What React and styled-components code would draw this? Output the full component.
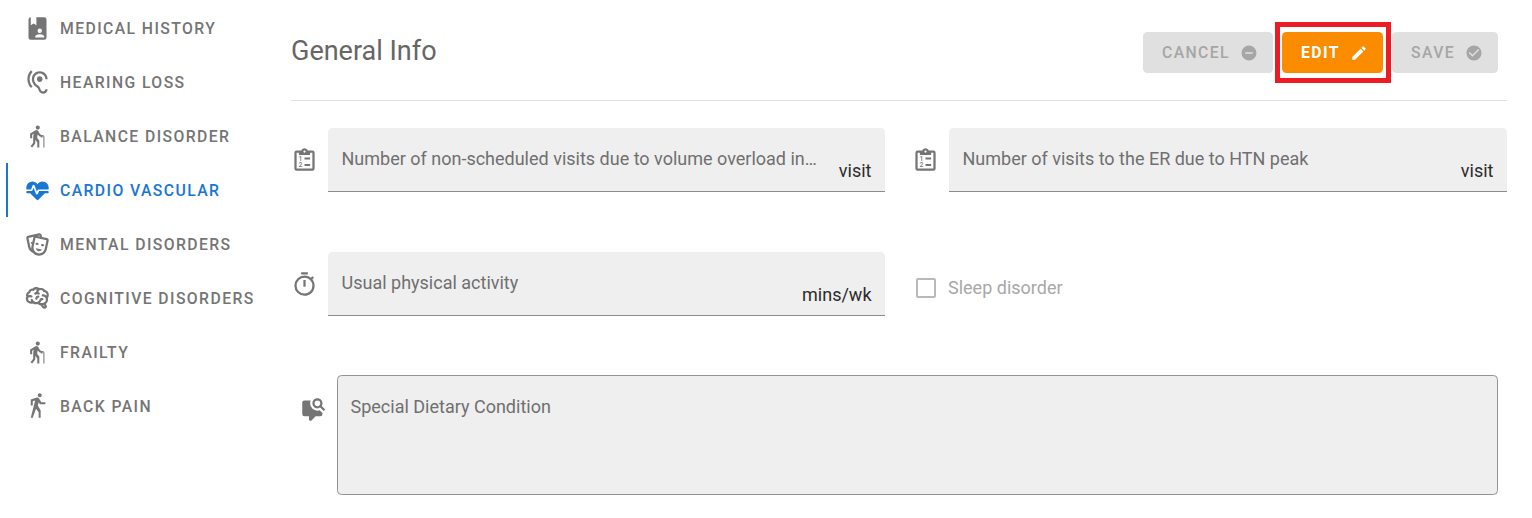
import React from "react";
import styled, { createGlobalStyle } from "styled-components";
import { MdElderly } from "react-icons/md";

const GlobalStyle = createGlobalStyle`
  *, *::before, *::after { box-sizing: border-box; }
  body {
    margin: 0;
    background: #fff;
    font-family: Roboto, "Liberation Sans", sans-serif;
    overflow: hidden;
  }
`;

const GREY = "#757575";
const BLUE = "#1976d2";

const paths = {
  bookAccount:
    "M18,2A2,2 0 0,1 20,4V20A2,2 0 0,1 18,22H6A2,2 0 0,1 4,20V4A2,2 0 0,1 6,2V9L8.5,7.5L11,9V2H18M14,12A2,2 0 0,0 12,14A2,2 0 0,0 14,16A2,2 0 0,0 16,14A2,2 0 0,0 14,12M18,20V19C18,17.67 15.33,17 14,17C12.67,17 10,17.67 10,19V20H18Z",
  ear: "M17 20c-.29 0-.56-.06-.76-.15-.71-.37-1.21-.88-1.71-2.38-.51-1.56-1.47-2.29-2.39-3-.79-.61-1.61-1.24-2.32-2.53C9.29 10.98 9 9.93 9 9c0-2.8 2.2-5 5-5s5 2.2 5 5h2c0-3.93-3.07-7-7-7S7 5.07 7 9c0 1.26.38 2.65 1.07 3.9.91 1.65 1.98 2.48 2.85 3.15.81.62 1.39 1.07 1.71 2.05.6 1.82 1.37 2.84 2.73 3.55.51.23 1.07.35 1.64.35 2.21 0 4-1.79 4-4h-2c0 1.1-.9 2-2 2zM7.64 2.64L6.22 1.22C4.23 3.21 3 5.96 3 9s1.23 5.79 3.22 7.78l1.41-1.41C6.01 13.74 5 11.49 5 9s1.01-4.74 2.64-6.36zM11.5 9c0 1.38 1.12 2.5 2.5 2.5s2.5-1.12 2.5-2.5-1.12-2.5-2.5-2.5-2.5 1.12-2.5 2.5z",
  heartPulse:
    "M7.5,4A5.5,5.5 0 0,0 2,9.5C2,10 2.09,10.5 2.22,11H6.3L7.57,7.63C7.87,6.83 9.05,6.75 9.43,7.63L11.5,13L12.09,11.58C12.22,11.25 12.57,11 13,11H21.78C21.91,10.5 22,10 22,9.5A5.5,5.5 0 0,0 16.5,4C14.64,4 13,4.93 12,6.34C11,4.93 9.36,4 7.5,4V4M3,12.5A1,1 0 0,0 2,13.5A1,1 0 0,0 3,14.5H5.44L11,20C12,20.9 12,20.9 13,20L18.56,14.5H21A1,1 0 0,0 22,13.5A1,1 0 0,0 21,12.5H13.4L12.47,14.8C12.07,15.81 10.92,15.67 10.55,14.83L8.5,9.5L7.54,11.83C7.39,12.21 7.05,12.5 6.6,12.5H3Z",
  masks:
    "M8.11,19.45C5.94,18.65 4.22,16.78 3.71,14.35L2.05,6.54C1.81,5.46 2.5,4.4 3.58,4.17L13.35,2.1L13.38,2.09C14.45,1.88 15.5,2.57 15.72,3.63L16.07,5.3L20.42,6.23H20.45C21.5,6.47 22.18,7.53 21.96,8.59L20.3,16.41C19.5,20.18 15.78,22.6 12,21.79C10.42,21.46 9.08,20.61 8.11,19.45V19.45M20,8.18L10.23,6.1L8.57,13.92V13.95C8,16.63 9.73,19.27 12.42,19.84C15.11,20.41 17.77,18.69 18.34,16L20,8.18M16,16.5C15.37,17.57 14.11,18.16 12.83,17.89C11.56,17.62 10.65,16.57 10.5,15.34L16,16.5M8.47,5.17L4,6.13L5.66,13.94L5.67,13.97C5.82,14.68 6.12,15.32 6.53,15.87C6.43,15.1 6.45,14.3 6.62,13.5L7.05,11.5C6.6,11.42 6.21,11.17 6,10.81C6.06,10.2 6.56,9.66 7.25,9.5C7.33,9.5 7.4,9.5 7.5,9.5L8.28,5.69C8.32,5.5 8.38,5.33 8.47,5.17M15.03,12.23C15.35,11.7 16.03,11.42 16.72,11.57C17.41,11.71 17.91,12.24 18,12.86C17.67,13.38 17,13.66 16.3,13.5C15.61,13.37 15.11,12.84 15.03,12.23M10.15,11.19C10.47,10.66 11.14,10.38 11.83,10.53C12.5,10.67 13.03,11.21 13.11,11.82C12.78,12.34 12.11,12.63 11.42,12.5C10.73,12.33 10.23,11.8 10.15,11.19M11.97,4.43L13.93,4.85L13.77,4.05L11.97,4.43Z",
  brain:
    "M21.33,12.91C21.42,14.46 20.71,15.95 19.44,16.86L20.21,18.35C20.44,18.8 20.47,19.33 20.27,19.8C20.08,20.27 19.69,20.64 19.21,20.8L18.42,21.05C18.25,21.11 18.06,21.14 17.88,21.14C17.37,21.14 16.89,20.91 16.56,20.5L14.44,18C13.55,17.85 12.71,17.47 12,16.9C11.5,17.05 11,17.13 10.5,17.13C9.62,17.13 8.74,16.86 8,16.34C7.47,16.5 6.93,16.57 6.38,16.56C5.59,16.57 4.81,16.41 4.08,16.11C2.65,15.47 1.7,14.07 1.65,12.5C1.57,11.78 1.69,11.05 2,10.39C1.71,9.64 1.68,8.82 1.93,8.06C2.3,7.11 3,6.32 3.87,5.82C4.45,4.13 6.08,3 7.87,3.12C9.47,1.62 11.92,1.46 13.7,2.75C14.12,2.64 14.56,2.58 15,2.58C16.36,2.55 17.65,3.15 18.5,4.22C20.54,4.75 22,6.57 22.08,8.69C22.13,9.8 21.83,10.89 21.22,11.82C21.29,12.18 21.33,12.54 21.33,12.91M16.33,11.5C16.9,11.57 17.35,12 17.35,12.57A1,1 0 0,1 16.35,13.57H15.72C15.4,14.47 14.84,15.26 14.1,15.86C14.35,15.95 14.61,16 14.87,16.07C20,16 19.4,12.87 19.4,12.82C19.34,11.39 18.14,10.27 16.71,10.33A1,1 0 0,1 15.71,9.33A1,1 0 0,1 16.71,8.33C17.94,8.36 19.12,8.82 20.04,9.63C20.09,9.34 20.12,9.04 20.12,8.74C20.06,7.5 19.5,6.42 17.25,6.21C16,3.25 12.85,4.89 12.85,5.81V5.81C12.82,6.04 13.06,6.53 13.1,6.56A1,1 0 0,1 14.1,7.56C14.1,8.11 13.65,8.56 13.1,8.56V8.56C12.57,8.54 12.07,8.34 11.67,8C11.19,8.31 10.64,8.5 10.07,8.56V8.56C9.5,8.61 9.03,8.21 9,7.66C8.92,7.1 9.33,6.61 9.88,6.56C10.04,6.54 10.82,6.42 10.82,5.79V5.79C10.82,5.13 11.07,4.5 11.5,4C10.58,3.75 9.59,4.08 8.59,5.29C6.75,5 6,5.25 5.45,7.2C4.5,7.67 4,8 3.78,9C4.86,8.78 5.97,8.87 7,9.25C7.5,9.44 7.78,10 7.59,10.54C7.4,11.06 6.82,11.32 6.3,11.13C5.57,10.81 4.75,10.79 4,11.07C3.68,11.34 3.68,11.9 3.68,12.34C3.68,13.08 4.05,13.77 4.68,14.17C5.21,14.44 5.8,14.58 6.39,14.57C6.24,14.31 6.11,14.04 6,13.76C5.81,13.22 6.1,12.63 6.64,12.44C7.18,12.25 7.77,12.54 7.96,13.08C8.36,14.22 9.38,15 10.58,15.13C11.95,15.06 13.17,14.25 13.77,13C14,11.62 15.11,11.5 16.33,11.5M18.33,18.97L17.71,17.67L17,17.83L18,19.08L18.33,18.97M13.68,10.36C13.7,9.83 13.3,9.38 12.77,9.33C12.06,9.29 11.37,9.53 10.84,10C10.27,10.58 9.97,11.38 10,12.19A1,1 0 0,0 11,13.19C11.57,13.19 12,12.74 12,12.19C12,11.92 12.07,11.65 12.23,11.43C12.35,11.33 12.5,11.28 12.66,11.28C13.21,11.31 13.68,10.9 13.68,10.36Z",
  walk: "M14.12,10H19V8.2H15.38L13.38,4.87C13.08,4.37 12.54,4.03 11.92,4.03C11.74,4.03 11.58,4.06 11.42,4.11L6,5.8V11H7.8V7.33L9.91,6.67L6,22H7.8L10.67,13.89L13,17V22H14.8V15.59L12.31,11.05L13.04,8.18M14,3.8C15,3.8 15.8,3 15.8,2C15.8,1 15,0.2 14,0.2C13,0.2 12.2,1 12.2,2C12.2,3 13,3.8 14,3.8Z",
  timer:
    "M12,20A7,7 0 0,1 5,13A7,7 0 0,1 12,6A7,7 0 0,1 19,13A7,7 0 0,1 12,20M19.03,7.39L20.45,5.97C20,5.46 19.55,5 19.04,4.56L17.62,6C16.07,4.74 14.12,4 12,4A9,9 0 0,0 3,13A9,9 0 0,0 12,22C17,22 21,17.97 21,13C21,10.88 20.26,8.93 19.03,7.39M11,14H13V8H11M15,1H9V3H15V1Z",
  commentSearch:
    "M15.5,2C13,2 11,4 11,6.5C11,9 13,11 15.5,11C16.4,11 17.2,10.7 17.9,10.3L21,13.4L22.4,12L19.3,8.9C19.7,8.2 20,7.4 20,6.5C20,4 18,2 15.5,2M15.5,4A2.5,2.5 0 0,1 18,6.5A2.5,2.5 0 0,1 15.5,9A2.5,2.5 0 0,1 13,6.5A2.5,2.5 0 0,1 15.5,4M3.7,4H9.5C9.2,4.8 9,5.6 9,6.5A6.5,6.5 0 0,0 15.5,13C16.2,13 16.9,12.9 17.5,12.7L20,15.2V16A2,2 0 0,1 18,18H13.9L10.2,21.7C10,21.9 9.75,22 9.5,22H9A1,1 0 0,1 8,21V18H4A2,2 0 0,1 2,16V5.7A1.7,1.7 0 0,1 3.7,4Z",
  clipboard:
    "M19,3H14.82C14.4,1.84 13.3,1 12,1C10.7,1 9.6,1.84 9.18,3H5A2,2 0 0,0 3,5V19A2,2 0 0,0 5,21H19A2,2 0 0,0 21,19V5A2,2 0 0,0 19,3M12,3A1,1 0 0,1 13,4A1,1 0 0,1 12,5A1,1 0 0,1 11,4A1,1 0 0,1 12,3M5,19V5H7V7H17V5H19V19H5M12,9.3H17V11H12V9.3M12,15.2H17V16.9H12V15.2Z",
  minusCircle:
    "M17,13H7V11H17M12,2A10,10 0 0,0 2,12A10,10 0 0,0 12,22A10,10 0 0,0 22,12A10,10 0 0,0 12,2Z",
  checkCircle:
    "M12 2C6.5 2 2 6.5 2 12S6.5 22 12 22 22 17.5 22 12 17.5 2 12 2M10 17L5 12L6.41 10.59L10 14.17L17.59 6.58L19 8L10 17Z",
  pencil:
    "M20.71,7.04C21.1,6.65 21.1,6 20.71,5.63L18.37,3.29C18,2.9 17.35,2.9 16.96,3.29L15.12,5.12L18.87,8.87M3,17.25V21H6.75L17.81,9.93L14.06,6.18L3,17.25Z",
};

const Svg = styled.svg`
  display: block;
  flex: none;
  width: ${(p) => p.$size}px;
  height: ${(p) => p.$size}px;
  fill: currentColor;
`;

function Icon({ name, size = 27, children }) {
  return (
    <Svg viewBox="0 0 24 24" $size={size} aria-hidden="true">
      <path d={paths[name]} fillRule={name === "clipboard" ? "evenodd" : undefined} />
      {children}
    </Svg>
  );
}

const IconDigit = styled.text`
  font: 500 6px Roboto, sans-serif;
`;

function NumberedClipboard() {
  return (
    <Icon name="clipboard">
      <IconDigit x="6.6" y="12.3">1</IconDigit>
      <IconDigit x="6.6" y="18.2">2</IconDigit>
    </Icon>
  );
}

const Page = styled.div`
  display: grid;
  grid-template-columns: 285px 1216px;
  height: 518px;
  padding-left: 6px;
`;

const Tabs = styled.nav`
  display: flex;
  flex-direction: column;
  padding-top: 1px;
`;

const Tab = styled.a`
  display: flex;
  align-items: center;
  gap: 9px;
  height: 54px;
  padding-left: 16px;
  border-left: 2px solid ${(p) => (p.$active ? BLUE : "transparent")};
  color: ${(p) => (p.$active ? BLUE : GREY)};
  font-size: 15.75px;
  font-weight: 500;
  letter-spacing: 1.406px;
  white-space: nowrap;
`;

const ElderlyIcon = styled(MdElderly)`
  flex: none;
  width: 24.5px;
  height: 24.5px;
  margin-right: 2.5px;
`;

const Content = styled.main`
  display: flex;
  flex-direction: column;
`;

const Header = styled.header`
  display: flex;
  justify-content: space-between;
  height: 101px;
  padding: 32px 9px 0 0;
  border-bottom: 1px solid #e0e0e0;
`;

const Title = styled.h1`
  margin: 0;
  padding-top: 1px;
  color: #666;
  font-size: 27px;
  font-weight: 400;
  line-height: 36px;
`;

const Actions = styled.div`
  display: flex;
  align-items: flex-start;
  gap: 9px;
`;

const Button = styled.button`
  display: flex;
  align-items: center;
  justify-content: space-between;
  width: ${(p) => p.$width}px;
  height: 41px;
  padding: 0 15px 0 19px;
  border: 0;
  border-radius: 4.5px;
  background: ${(p) => (p.$primary ? "#fb8c00" : "#e0e0e0")};
  color: ${(p) => (p.$primary ? "#fff" : "#a6a6a6")};
  font: ${(p) => (p.$primary ? 700 : 500)} 15.75px Roboto, sans-serif;
  letter-spacing: 1.406px;
`;

const Highlight = styled.div`
  position: relative;
  &::after {
    content: "";
    position: absolute;
    inset: -10px -8px -10px -7px;
    border: 5px solid #ed1c24;
    pointer-events: none;
  }
`;

const FieldGrid = styled.div`
  display: grid;
  grid-template-columns: 594px 595px;
  column-gap: 27px;
  row-gap: 60px;
  padding-top: 27px;
`;

const FieldRow = styled.div`
  display: flex;
  align-items: center;
  gap: 10px;
  height: 64px;
  color: ${GREY};
`;

const Filled = styled.div`
  display: flex;
  flex: 1;
  justify-content: space-between;
  height: 64px;
  padding: 0 13.5px 0 13.5px;
  border-bottom: 1px solid #8c8c8c;
  border-radius: 4.5px 4.5px 0 0;
  background: #efefef;
  font-size: 18px;
  line-height: 22px;
  white-space: nowrap;
`;

const Label = styled.span`
  padding-top: 20px;
  color: #707070;
`;

const Suffix = styled.span`
  padding-top: 32px;
  color: #2b2b2b;
`;

const CheckRow = styled.label`
  display: flex;
  align-items: center;
  gap: 12px;
  height: 64px;
  padding: 8px 0 0 4px;
  color: #a8a8a8;
  font-size: 18px;
`;

const Box = styled.span`
  width: 20px;
  height: 20px;
  border: 2px solid #b9b9b9;
  border-radius: 2px;
`;

const CheckLabel = styled.span`
  padding-bottom: 2px;
`;

const NotesRow = styled.div`
  display: flex;
  gap: 10px;
  padding: 59px 9px 0;
  color: ${GREY};
`;

const NotesIcon = styled.div`
  padding-top: 21px;
`;

const Notes = styled.div`
  flex: 1;
  height: 120px;
  padding: 20px 12.5px;
  border: 1px solid #939393;
  border-radius: 4.5px;
  background: #efefef;
  color: #707070;
  font-size: 18px;
  line-height: 22px;
`;

const tabs = [
  ["MEDICAL HISTORY", <Icon name="bookAccount" />],
  ["HEARING LOSS", <Icon name="ear" />],
  ["BALANCE DISORDER", <ElderlyIcon />],
  ["CARDIO VASCULAR", <Icon name="heartPulse" />],
  ["MENTAL DISORDERS", <Icon name="masks" />],
  ["COGNITIVE DISORDERS", <Icon name="brain" />],
  ["FRAILTY", <ElderlyIcon />],
  ["BACK PAIN", <Icon name="walk" />],
];

function Field({ icon, label, unit }) {
  return (
    <FieldRow>
      {icon}
      <Filled>
        <Label>{label}</Label>
        <Suffix>{unit}</Suffix>
      </Filled>
    </FieldRow>
  );
}

export default function App() {
  return (
    <>
      <GlobalStyle />
      <Page>
        <Tabs>
          {tabs.map(([label, icon]) => (
            <Tab key={label} $active={label === "CARDIO VASCULAR"}>
              {icon}
              <span>{label}</span>
            </Tab>
          ))}
        </Tabs>
        <Content>
          <Header>
            <Title>General Info</Title>
            <Actions>
              <Button $width={130} disabled>
                CANCEL <Icon name="minusCircle" size={18} />
              </Button>
              <Highlight>
                <Button $width={101} $primary>
                  EDIT <Icon name="pencil" size={18} />
                </Button>
              </Highlight>
              <Button $width={106} disabled>
                SAVE <Icon name="checkCircle" size={18} />
              </Button>
            </Actions>
          </Header>
          <FieldGrid>
            <Field
              icon={<NumberedClipboard />}
              label="Number of non-scheduled visits due to volume overload in…"
              unit="visit"
            />
            <Field
              icon={<NumberedClipboard />}
              label="Number of visits to the ER due to HTN peak"
              unit="visit"
            />
            <Field icon={<Icon name="timer" />} label="Usual physical activity" unit="mins/wk" />
            <CheckRow>
              <Box />
              <CheckLabel>Sleep disorder</CheckLabel>
            </CheckRow>
          </FieldGrid>
          <NotesRow>
            <NotesIcon>
              <Icon name="commentSearch" />
            </NotesIcon>
            <Notes>Special Dietary Condition</Notes>
          </NotesRow>
        </Content>
      </Page>
    </>
  );
}
